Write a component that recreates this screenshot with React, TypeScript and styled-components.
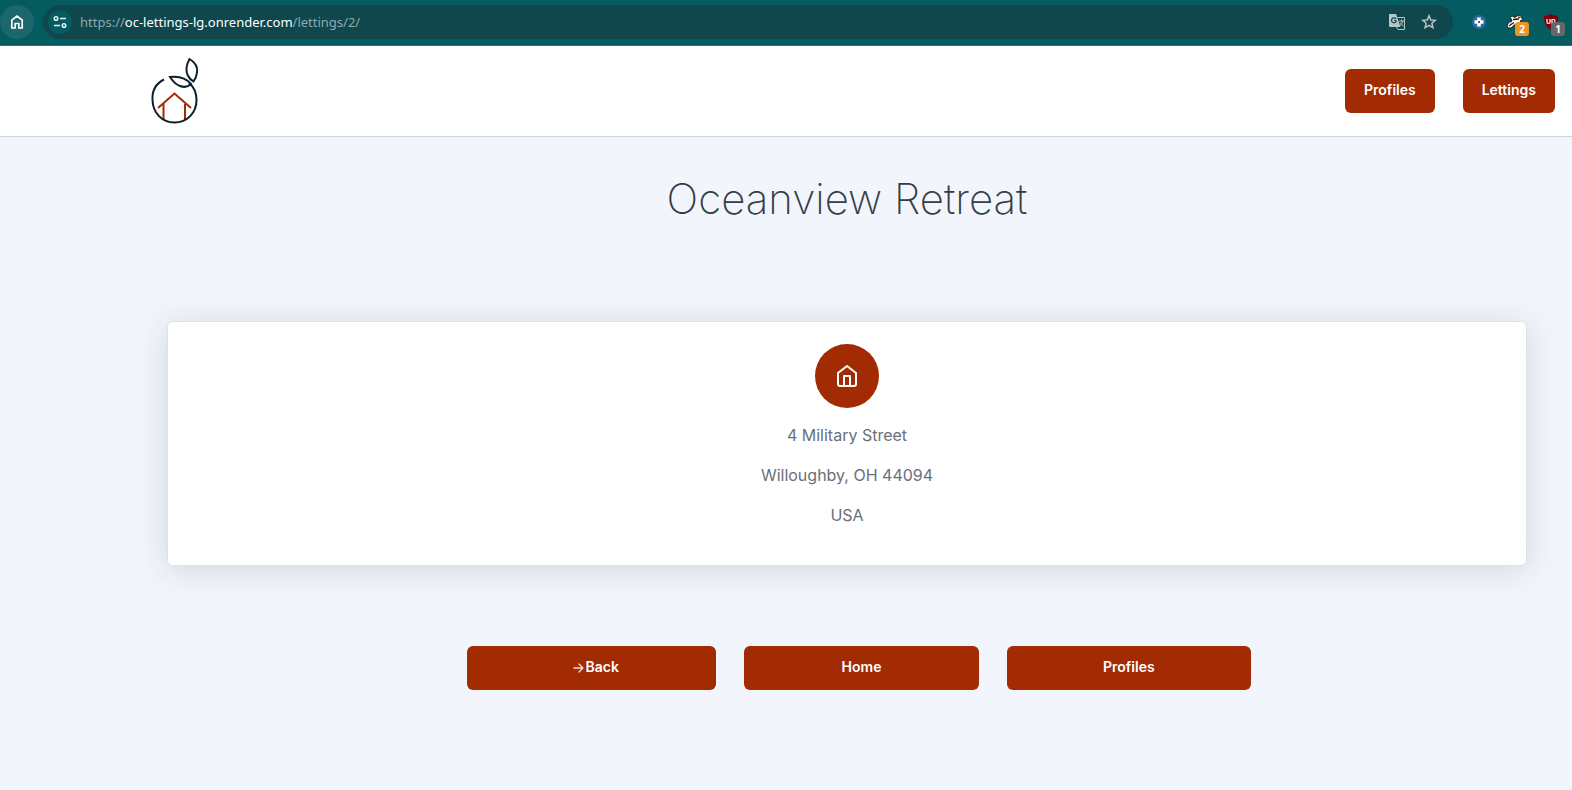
import React from "react";
import styled, { createGlobalStyle } from "styled-components";

const brand = "#a32b03";

const GlobalStyle = createGlobalStyle`
  *, *::before, *::after { box-sizing: border-box; }
  html { background: #f2f6fc; }
  body {
    margin: 0;
    background: #f2f6fc;
    color: #69707a;
    font-family: "Metropolis", "Inter", "Liberation Sans", sans-serif;
    font-size: 16px;
    line-height: 24px;
  }
`;

const BrowserBar = styled.div`
  display: flex;
  align-items: center;
  height: 46px;
  padding: 0 11px 2px 0;
  background: #045b60;
  border-bottom: 1px solid #2d777c;
`;

const RoundButton = styled.button<{ $size: number; $bg: string }>`
  display: flex;
  align-items: center;
  justify-content: center;
  flex: none;
  width: ${(p) => p.$size}px;
  height: ${(p) => p.$size}px;
  padding: 0;
  border: 0;
  border-radius: 50%;
  background: ${(p) => p.$bg};
`;

const AddressBar = styled.div`
  display: flex;
  align-items: center;
  flex: 1;
  min-width: 0;
  height: 34px;
  margin-left: 9px;
  padding: 0 14px 0 5px;
  gap: 8px;
  border-radius: 17px;
  background: #0f474d;
`;

const Url = styled.div`
  flex: 1;
  min-width: 0;
  overflow: hidden;
  white-space: nowrap;
  font-family: "Segoe UI", "Noto Sans", sans-serif;
  font-size: 13px;
  line-height: 20px;
  color: #8fa9ac;
  b { font-weight: 400; color: #fff; }
`;

const PlainButton = styled.button`
  position: relative;
  display: flex;
  align-items: center;
  justify-content: center;
  flex: none;
  width: 20px;
  height: 20px;
  padding: 0;
  border: 0;
  background: none;
`;

const AddressActions = styled.div`
  display: flex;
  gap: 12px;
`;

const Extensions = styled.div`
  display: flex;
  gap: 16px;
  margin-left: 16px;
`;

const Badge = styled.span<{ $bg: string }>`
  position: absolute;
  top: 10px;
  left: 10px;
  width: 14px;
  height: 14px;
  border-radius: 3px;
  background: ${(p) => p.$bg};
  color: #fff;
  font: 700 10px/14px "Open Sans", sans-serif;
  text-align: center;
`;

const Nav = styled.nav`
  display: flex;
  align-items: center;
  justify-content: space-between;
  height: 91px;
  padding: 0 17px 0 150px;
  background: #fff;
  border-bottom: 1px solid #cfd5de;
`;

const HomeLink = styled.a`
  display: flex;
  padding-top: 2px;
`;

const NavLinks = styled.div`
  display: flex;
  gap: 28px;
`;

const ButtonLink = styled.a`
  display: flex;
  align-items: center;
  justify-content: center;
  height: 44px;
  padding: 0 19px 2px;
  border-radius: 6px;
  background: ${brand};
  color: #fff;
  font-size: 14px;
  font-weight: 600;
  line-height: 14px;
  text-decoration: none;
`;

const Main = styled.main`
  padding: 36px 45px 60px 167px;
`;

const Title = styled.h1`
  margin: 0;
  color: #363d47;
  font-size: 42px;
  font-weight: 200;
  line-height: 52px;
  text-align: center;
`;

const Card = styled.section`
  margin-top: 96px;
  padding: 22px 20px 38px;
  border: 1px solid #e0e3e6;
  border-radius: 6px;
  background: #fff;
  box-shadow: 0 4px 32px rgba(33, 40, 40, 0.15);
  text-align: center;
`;

const IconCircle = styled.div`
  display: flex;
  align-items: center;
  justify-content: center;
  width: 64px;
  height: 64px;
  margin: 0 auto 15px;
  border-radius: 50%;
  background: ${brand};
`;

const AddressLine = styled.p`
  margin: 0;
  & + & { margin-top: 16px; }
`;

const ActionsWrap = styled.div`
  padding-left: 24px;
`;

const Actions = styled.div`
  display: grid;
  grid-template-columns: 249fr 234fr 244fr;
  gap: 28px;
  max-width: 784px;
  margin: 80px auto 0;
`;

const Logo = () => (
  <svg width="50" height="70" viewBox="0 0 50 70" fill="none" role="img" aria-label="Home">
    <g stroke={brand} strokeWidth="2">
      <path d="M8 51L24.500 36.500L41 51" />
      <path d="M13.500 47V63M35 47V63" />
    </g>
    <g stroke="#0b2029" strokeWidth="2">
      <path d="M14 22.500C6 26.500 2 34 2.500 43C3 56 12 65.500 24.500 65.500C37 65.500 46.500 56 46.500 43C46.500 36 44 30 39 26" />
      <path d="M20 20C28 19 36 21 41 27C38 30 34 30.500 30 29C25.500 27.500 23 24.500 20 20Z" />
      <path d="M39.500 2C45.500 5.500 48 9.500 47 15.500C46.500 19.500 45.500 22 43.500 24.500C38 21 36 16.500 36.500 11C37 7 38 4.500 39.500 2Z" />
    </g>
  </svg>
);

export default function App() {
  return (
    <>
      <GlobalStyle />
      <BrowserBar>
        <RoundButton $size={34} $bg="#1b676b" aria-label="Home page">
          <svg width="14" height="16" viewBox="0 0 14 16" fill="none" stroke="#fff" strokeWidth="1.700">
            <path d="M1.800 6.200L7 2L12.200 6.200V14H8.800V9.500H5.200V14H1.800Z" />
          </svg>
        </RoundButton>
        <AddressBar>
          <RoundButton $size={24} $bg="#045b60" aria-label="Site information">
            <svg width="14" height="14" viewBox="0 0 14 14" fill="none" stroke="#e4f1f1" strokeWidth="1.500">
              <circle cx="3" cy="3.500" r="1.800" />
              <path d="M7 3.500H13M1 10.500H7" />
              <circle cx="11" cy="10.500" r="1.800" />
            </svg>
          </RoundButton>
          <Url>
            https://<b>oc-lettings-lg.onrender.com</b>/lettings/2/
          </Url>
          <AddressActions>
            <PlainButton aria-label="Translate this page">
              <svg width="18" height="18" viewBox="0 0 18 18" fill="none">
                <path d="M1 1H8L12.500 14H2Q1 14 1 13Z" fill="#bcc5c6" />
                <path d="M9.500 4.500H16.500V16.500H10L8.500 14" stroke="#bcc5c6" />
                <path d="M8 5.800A2.500 2.500 0 1 0 8 8.800V7.500H6" stroke="#0f474d" strokeWidth="1.200" />
                <path d="M11 8H16M13.500 6.500V8M15 8Q14 11 11.500 13M12 9.500L15.500 13.500" stroke="#bcc5c6" />
              </svg>
            </PlainButton>
            <PlainButton aria-label="Bookmark this page">
              <svg width="16" height="16" viewBox="0 0 16 16" fill="none" stroke="#bcc5c6" strokeWidth="1.500">
                <path d="M8 1.800L9.800 6L14.300 6.300L10.900 9.300L11.900 13.800L8 11.400L4.100 13.800L5.100 9.300L1.700 6.300L6.200 6Z" />
              </svg>
            </PlainButton>
          </AddressActions>
        </AddressBar>
        <Extensions>
          <PlainButton aria-label="Extension">
            <svg width="14" height="14" viewBox="0 0 14 14">
              <circle cx="7" cy="7" r="7" fill="#2a6a9a" />
              <path d="M5.200 2.500H8.800V5.200H11.500V8.800H8.800V11.500H5.200V8.800H2.500V5.200H5.200Z" fill="#fff" />
              <path d="M6 6H8V8H6Z" fill="#2a6a9a" />
            </svg>
          </PlainButton>
          <PlainButton aria-label="Extension, 2 notifications">
            <svg width="18" height="16" viewBox="0 0 18 16">
              <path d="M1 12L2.500 8.500L6 7L4.500 3.500L6 2L9 3.500L12 1L15.500 2.500L16.500 6L14 7L16 10L9 10.500L5 14L2 14Z" fill="#fff" stroke="#241a16" />
              <path d="M3 12L8 8.500M7 5.500L13 5M12 3L14.500 4" stroke="#241a16" strokeWidth="1.300" />
              <path d="M3.500 10L6 8.500M11 2.500L14 2.500" stroke="#e9a36b" />
            </svg>
            <Badge $bg="#ee9426">2</Badge>
          </PlainButton>
          <PlainButton aria-label="Ad blocker, 1 blocked">
            <svg width="16" height="16" viewBox="0 0 16 16" fill="none">
              <path d="M8 0Q11 2 15 2Q15.500 12 8 16Q.5 12 1 2Q5 2 8 0Z" fill="#800008" />
              <path d="M4 5V8Q4 9.500 5.500 9.500Q7 9.500 7 8V5M9 10V5.500H10.500A1.500 1.500 0 0 1 10.500 8.500H9" stroke="#fff" strokeWidth="1.200" />
            </svg>
            <Badge $bg="#666">1</Badge>
          </PlainButton>
        </Extensions>
      </BrowserBar>
      <Nav>
        <HomeLink href="#">
          <Logo />
        </HomeLink>
        <NavLinks>
          <ButtonLink href="#profiles">Profiles</ButtonLink>
          <ButtonLink href="#lettings">Lettings</ButtonLink>
        </NavLinks>
      </Nav>
      <Main>
        <Title>Oceanview Retreat</Title>
        <Card>
          <IconCircle>
            <svg width="24" height="24" viewBox="0 0 24 24" fill="none" stroke="#fff" strokeWidth="2" strokeLinejoin="round" strokeLinecap="round">
              <path d="M3 9l9-7 9 7v11a2 2 0 0 1-2 2H5a2 2 0 0 1-2-2z" />
              <path d="M9 22V12H15V22" />
            </svg>
          </IconCircle>
          <AddressLine>4 Military Street</AddressLine>
          <AddressLine>Willoughby, OH 44094</AddressLine>
          <AddressLine>USA</AddressLine>
        </Card>
        <ActionsWrap>
          <Actions>
            <ButtonLink href="#back">
              <svg width="21" height="16" viewBox="0 0 21 16" fill="none" stroke="#f3dcd4" strokeWidth="1.300" strokeLinecap="round" strokeLinejoin="round">
                <path d="M10 9H19M15 5L19 9L15 13" />
              </svg>
              Back
            </ButtonLink>
            <ButtonLink href="#home">Home</ButtonLink>
            <ButtonLink href="#profiles">Profiles</ButtonLink>
          </Actions>
        </ActionsWrap>
      </Main>
    </>
  );
}
